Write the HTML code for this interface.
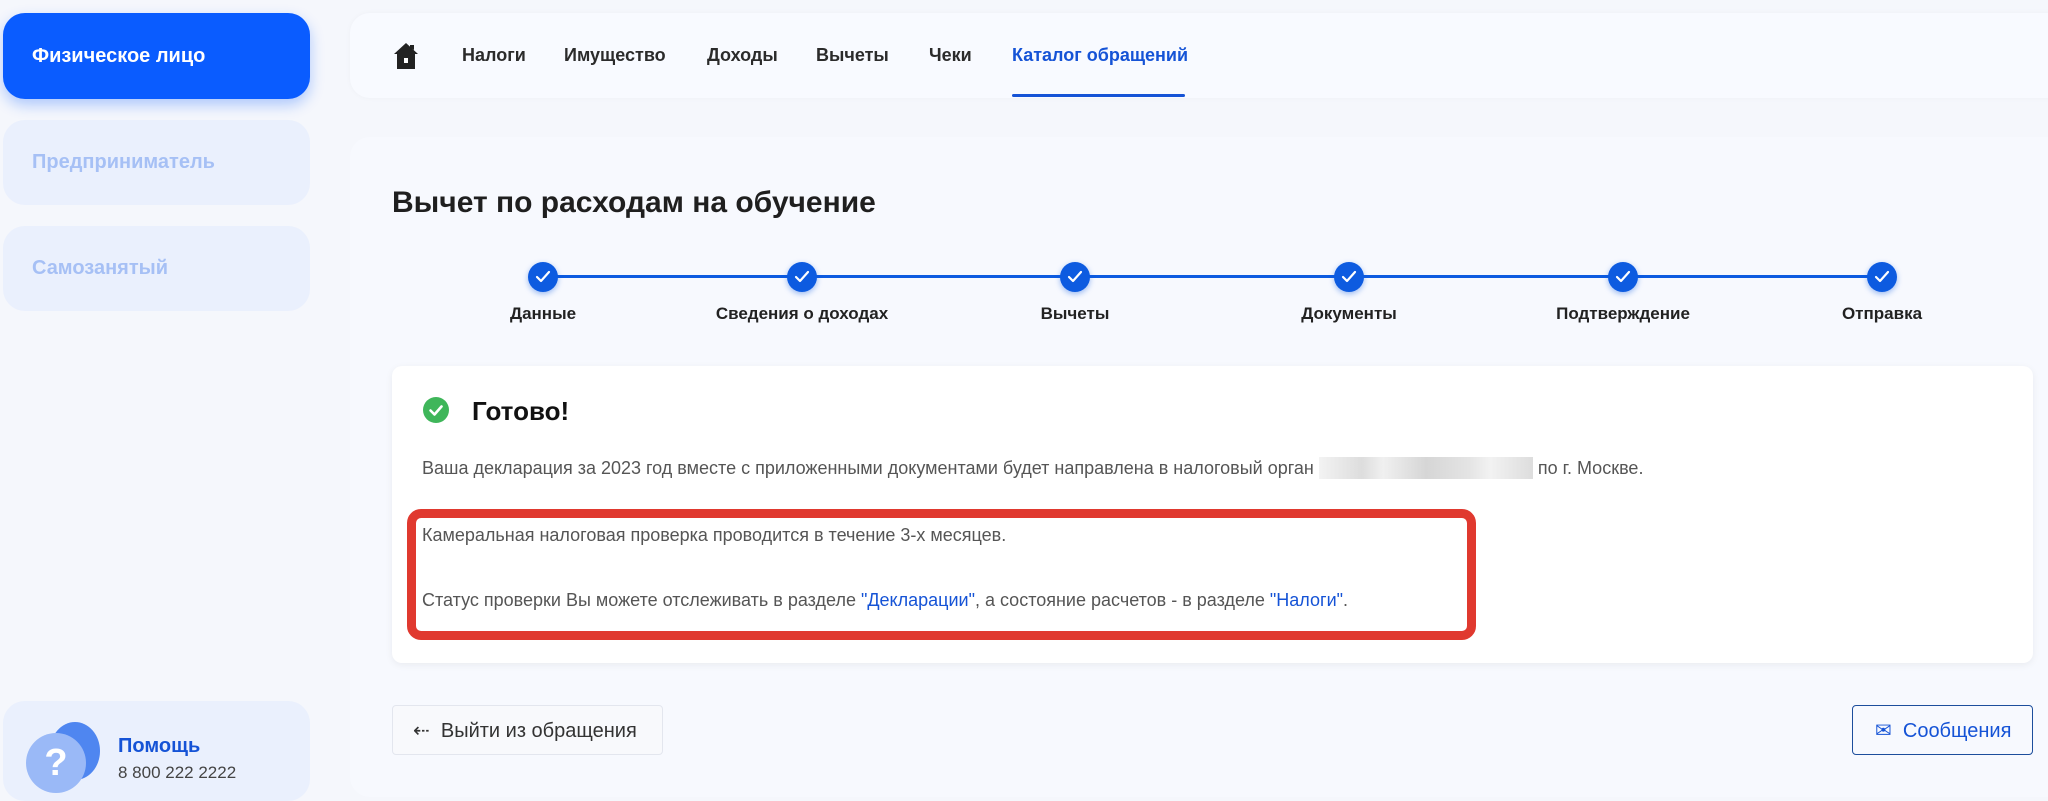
<!DOCTYPE html>
<html><head><meta charset="utf-8"><style>
*{box-sizing:border-box;margin:0;padding:0}
body{width:2048px;height:774px;overflow:hidden;background:#f5f7fc;font-family:"Liberation Sans",Arial,sans-serif;position:relative;color:#222}
.abs{position:absolute}
.side{left:3px;width:307px;border-radius:22px;background:#eaf0fd;color:#a6c0f5;font-weight:bold;font-size:20px;padding-left:29px;display:flex;align-items:center}
.nav{left:350px;top:13px;width:1720px;height:85px;background:#f8faff;border-radius:20px;box-shadow:0 0 6px rgba(0,0,0,.03)}
.ni{top:45px;font-size:18px;font-weight:bold;color:#2b2b2b}
.step{top:265px;width:30px;height:30px;border-radius:50%;background:#0d5be0;box-shadow:0 2px 6px rgba(13,91,224,.4)}
.lbl{top:304px;font-size:17px;font-weight:bold;color:#222;transform:translateX(-50%);white-space:nowrap}
.txt{font-size:18px;color:#555}
a{color:#1553d6;text-decoration:none}
</style></head><body>
<div class="abs side" style="top:13px;height:86px;background:#0a5cff;color:#fff;box-shadow:0 6px 14px rgba(10,92,255,.3)">Физическое лицо</div>
<div class="abs side" style="top:120px;height:85px">Предприниматель</div>
<div class="abs side" style="top:226px;height:85px">Самозанятый</div>

<div class="abs nav"></div>
<svg class="abs" style="left:393px;top:42px" width="26" height="28" viewBox="0 0 26 28"><path d="M13 1 L25 12 L22 12 L22 27 L4 27 L4 12 L1 12 Z M17 3 L21 3 L21 8 L17 5Z" fill="#222"/><rect x="11" y="16" width="4" height="5" fill="#fff"/></svg>
<div class="abs ni" style="left:462px">Налоги</div>
<div class="abs ni" style="left:564px">Имущество</div>
<div class="abs ni" style="left:707px">Доходы</div>
<div class="abs ni" style="left:816px">Вычеты</div>
<div class="abs ni" style="left:929px">Чеки</div>
<div class="abs ni" style="left:1012px;color:#1553d6">Каталог обращений</div>
<div class="abs" style="left:1012px;top:94px;width:173px;height:3px;background:#1553d6;border-radius:2px"></div>

<div class="abs" style="left:350px;top:137px;width:1720px;height:660px;background:#f7f9fe;border-radius:20px"></div>
<div class="abs" style="left:392px;top:186px;font-size:30px;font-weight:bold;color:#1f1f1f">Вычет по расходам на обучение</div>

<div class="abs" style="left:543px;top:275px;width:1339px;height:3px;background:#0d5be0"></div>
<div class="abs step" style="left:528px;top:262px"></div>
<div class="abs step" style="left:787px;top:262px"></div>
<div class="abs step" style="left:1060px;top:262px"></div>
<div class="abs step" style="left:1334px;top:262px"></div>
<div class="abs step" style="left:1608px;top:262px"></div>
<div class="abs step" style="left:1867px;top:262px"></div>
<svg class="abs" style="left:0;top:-3px" width="2048" height="300">
<g fill="none" stroke="#fff" stroke-width="2.2" stroke-linecap="round" stroke-linejoin="round">
<path d="M537 280 l4 4 l8 -9"/><path d="M796 280 l4 4 l8 -9"/><path d="M1069 280 l4 4 l8 -9"/><path d="M1343 280 l4 4 l8 -9"/><path d="M1617 280 l4 4 l8 -9"/><path d="M1876 280 l4 4 l8 -9"/></g></svg>
<div class="abs lbl" style="left:543px">Данные</div>
<div class="abs lbl" style="left:802px">Сведения о доходах</div>
<div class="abs lbl" style="left:1075px">Вычеты</div>
<div class="abs lbl" style="left:1349px">Документы</div>
<div class="abs lbl" style="left:1623px">Подтверждение</div>
<div class="abs lbl" style="left:1882px">Отправка</div>

<div class="abs" style="left:392px;top:366px;width:1641px;height:297px;background:#fff;border-radius:10px;box-shadow:0 2px 8px rgba(0,0,0,.06)"></div>
<svg class="abs" style="left:423px;top:397px" width="26" height="26" viewBox="0 0 26 26"><circle cx="13" cy="13" r="13" fill="#3fb65a"/><path d="M7.5 13.5 l4 4 l7 -8" fill="none" stroke="#fff" stroke-width="2.6" stroke-linecap="round" stroke-linejoin="round"/></svg>
<div class="abs" style="left:472px;top:396px;font-size:26px;font-weight:bold;color:#111">Готово!</div>
<div class="abs txt" style="left:422px;top:457px">Ваша декларация за 2023 год вместе с приложенными документами будет направлена в налоговый орган <span style="display:inline-block;width:214px;height:22px;vertical-align:-5px;background:linear-gradient(90deg,#f3f3f3,#ddd 20%,#f0f0f0 30%,#d6d6d6 50%,#e4e4e4 70%,#f2f2f2 80%,#ddd)"></span> по г. Москве.</div>
<div class="abs" style="left:407px;top:509px;width:1069px;height:131px;border:9px solid #e0392f;border-radius:14px"></div>
<div class="abs txt" style="left:422px;top:525px">Камеральная налоговая проверка проводится в течение 3-х месяцев.</div>
<div class="abs txt" style="left:422px;top:590px">Статус проверки Вы можете отслеживать в разделе <a>"Декларации"</a>, а состояние расчетов - в разделе <a>"Налоги"</a>.</div>

<div class="abs" style="left:392px;top:705px;width:271px;height:50px;background:#f8f9fc;border:1px solid #e3e6ee;border-radius:4px;font-size:20px;color:#333;display:flex;align-items:center;padding-left:20px">⇠ &nbsp;Выйти из обращения</div>
<div class="abs" style="left:1852px;top:705px;width:181px;height:50px;border:1.5px solid #1d4e9c;border-radius:4px;font-size:20px;color:#1553d6;display:flex;align-items:center;padding-left:22px">✉ &nbsp;Сообщения</div>

<div class="abs" style="left:3px;top:701px;width:307px;height:100px;background:#eaf0fd;border-radius:22px"></div>
<div class="abs" style="left:50px;top:722px;width:50px;height:58px;border-radius:50%;background:#4f86f0"></div>
<div class="abs" style="left:26px;top:733px;width:60px;height:60px;border-radius:50%;background:#9ab9f7;color:#fff;font-size:38px;font-weight:bold;text-align:center;line-height:60px">?</div>
<div class="abs" style="left:118px;top:735px;font-size:20px;font-weight:bold;color:#1553d6">Помощь</div>
<div class="abs" style="left:118px;top:763px;font-size:17px;color:#444">8 800 222 2222</div>
</body></html>
